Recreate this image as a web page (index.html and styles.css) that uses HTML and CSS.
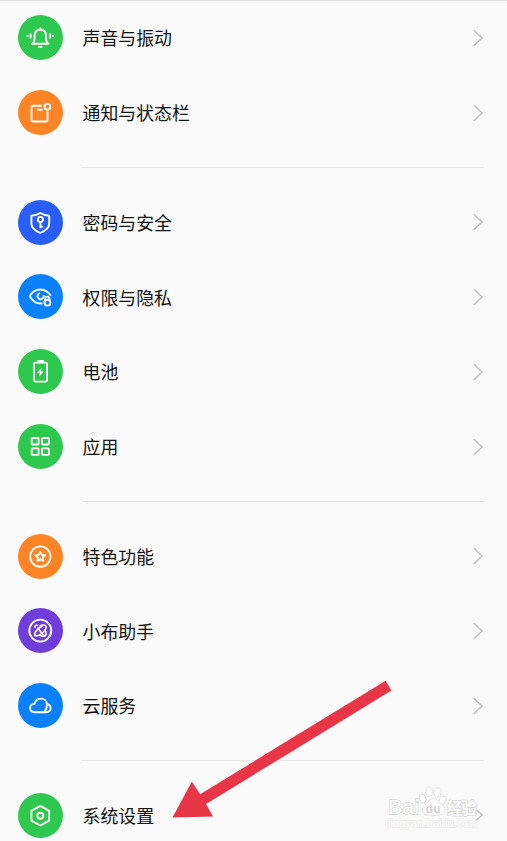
FILE: index.html
```html
<!DOCTYPE html>
<html lang="zh-CN">
<head>
    <meta charset="UTF-8">
    <meta name="viewport" content="width=device-width, initial-scale=1.0">
    <title>设置</title>
    <link rel="stylesheet" href="styles.css">
</head>
<body>

<!-- Chevron shared by all rows -->
<svg class="defs" width="0" height="0">
    <symbol id="chevron" viewBox="0 0 12 18">
        <path d="M1.7 1.2 L10 9 L1.7 16.8" fill="none" stroke="#c4c4c4" stroke-width="1.6"/>
    </symbol>
</svg>

<div class="settings">
    <!-- Sound and notifications -->
    <ul class="group">
        <li class="row">
            <span class="icon green">
                <svg viewBox="0 0 45 45">
                    <path d="M14 28.8 C16.8 27.2 16.6 25 16.6 21.2 C16.6 17 19 14.8 22.3 14.8 C25.6 14.8 28 17 28 21.2 C28 25 27.8 27.2 30.6 28.8 Z"/>
                    <path d="M22.3 12.5 V14.5 M20.3 32 H24.3 M12.6 18.5 V23.4 M32 18.5 V23.4 M9.6 20 V21.8 M35 20 V21.8"/>
                </svg>
            </span>
            <span class="label">声音与振动</span>
            <svg class="chevron"><use href="#chevron"/></svg>
        </li>
        <li class="row">
            <span class="icon orange">
                <svg viewBox="0 0 45 45">
                    <path d="M24 15.7 H15 Q13.5 15.7 13.5 17.2 V30 Q13.5 31.5 15 31.5 H28 Q29.5 31.5 29.5 30 V21.2 M19 19.7 H24.5"/>
                    <circle cx="29.4" cy="16.8" r="2.9"/>
                </svg>
            </span>
            <span class="label">通知与状态栏</span>
            <svg class="chevron"><use href="#chevron"/></svg>
        </li>
    </ul>

    <hr class="divider">

    <!-- Security, battery and apps -->
    <ul class="group">
        <li class="row">
            <span class="icon indigo">
                <svg viewBox="0 0 45 45">
                    <path d="M22.3 13 C25 14.7 28 15.5 31.2 15.8 V23.5 C31.2 28.5 27 31 22.3 33 C17.6 31 13.4 28.5 13.4 23.5 V15.8 C16.6 15.5 19.6 14.7 22.3 13 Z"/>
                    <circle cx="22.4" cy="19.4" r="2.5"/>
                    <path d="M22.4 22 V28.3 M22.4 26.6 H25.2"/>
                </svg>
            </span>
            <span class="label">密码与安全</span>
            <svg class="chevron"><use href="#chevron"/></svg>
        </li>
        <li class="row">
            <span class="icon blue">
                <svg viewBox="0 0 45 45">
                    <path d="M24.5 29.4 C18.5 30.3 14.5 26.8 12 22.8 Q11.6 22.2 12 21.6 C17 13.4 27.5 13.3 32.9 21.8"/>
                    <path d="M22 19.1 A3.1 3.1 0 1 0 25.6 21.2"/>
                    <circle cx="29.4" cy="28.7" r="2.9"/>
                    <path d="M27.3 26 V24.4 Q27.4 22.6 29.3 22.6 Q31.2 22.6 31.4 24.4 V26"/>
                </svg>
            </span>
            <span class="label">权限与隐私</span>
            <svg class="chevron"><use href="#chevron"/></svg>
        </li>
        <li class="row">
            <span class="icon green">
                <svg viewBox="0 0 45 45">
                    <rect x="16" y="13.6" width="13" height="19" rx="1.5"/>
                    <path d="M19.3 12.3 H25.7" stroke-width="2.6"/>
                    <path class="solid" d="M23.5 19.2 L19.2 24 H21.7 L21.1 27.4 L25.6 22.6 H23 Z"/>
                </svg>
            </span>
            <span class="label">电池</span>
            <svg class="chevron"><use href="#chevron"/></svg>
        </li>
        <li class="row">
            <span class="icon green">
                <svg viewBox="0 0 45 45">
                    <rect x="13.7" y="14" width="6.9" height="6.5" rx="1"/>
                    <rect x="24" y="14" width="6.9" height="6.5" rx="1"/>
                    <rect x="13.7" y="24.4" width="6.9" height="6.5" rx="1"/>
                    <rect x="24" y="24.4" width="6.9" height="6.5" rx="1"/>
                </svg>
            </span>
            <span class="label">应用</span>
            <svg class="chevron"><use href="#chevron"/></svg>
        </li>
    </ul>

    <hr class="divider">

    <!-- Features and services -->
    <ul class="group">
        <li class="row">
            <span class="icon orange">
                <svg viewBox="0 0 45 45">
                    <circle cx="22.3" cy="22.6" r="10.2"/>
                    <path d="M22.3 17.8 L23.8 20.8 L27.1 21.3 L24.7 23.6 L25.3 26.9 L22.3 25.3 L19.3 26.9 L19.9 23.6 L17.5 21.3 L20.8 20.8 Z"/>
                </svg>
            </span>
            <span class="label">特色功能</span>
            <svg class="chevron"><use href="#chevron"/></svg>
        </li>
        <li class="row">
            <span class="icon purple">
                <svg viewBox="0 0 45 45">
                    <circle cx="22.3" cy="22.6" r="11"/>
                    <g stroke-width="1.6">
                        <path d="M21.5 18.2 C24.5 16.3 28 16.6 28 19.2 C28 23 21 28.4 18 27.8 C15.8 27.2 16.6 24.4 19 22 C20.6 20.2 22.5 18.8 24.5 18.2"/>
                        <path d="M20.2 17.5 C17.8 16.6 16.2 18 17.2 20 M19.6 19.5 C22 23 25 27.8 27.3 27.7 C29 27 27.8 23.5 26.5 21.5 M21.5 27.3 C23.5 28.3 26 28.6 27.5 27.7"/>
                    </g>
                </svg>
            </span>
            <span class="label">小布助手</span>
            <svg class="chevron"><use href="#chevron"/></svg>
        </li>
        <li class="row">
            <span class="icon blue">
                <svg viewBox="0 0 45 45">
                    <path d="M16.7 29.2 H28.2 C31 29.2 32.6 27.3 32.6 25.2 C32.6 22.8 31 21.4 28.9 21.1 C28.6 17.8 26 15.6 22.8 15.6 C19.4 15.6 17.2 17.8 16.7 20.9 C14 20.9 12 22.8 12 25.1 C12 27.4 14 29.2 16.7 29.2 Z"/>
                    <path d="M28.9 21.1 C29.2 24.4 28.4 26.3 26.6 28.3"/>
                </svg>
            </span>
            <span class="label">云服务</span>
            <svg class="chevron"><use href="#chevron"/></svg>
        </li>
    </ul>

    <hr class="divider">

    <!-- System -->
    <ul class="group">
        <li class="row">
            <span class="icon green">
                <svg viewBox="0 0 45 45">
                    <path d="M22.3 12.9 L31.2 17.8 V27.6 L22.3 32.5 L13.4 27.6 V17.8 Z"/>
                    <circle cx="22.3" cy="22.7" r="3"/>
                </svg>
            </span>
            <span class="label">系统设置</span>
            <svg class="chevron"><use href="#chevron"/></svg>
        </li>
    </ul>
</div>

<!-- Arrow pointing at the system settings row -->
<svg class="pointer" viewBox="0 0 220 140">
    <path d="M0.5 137.5 L19.8 101.8 L28.2 114.3 L213.6 0.8 L219.4 10.5 L34 124 L41 136.5 Z" fill="#e93646"/>
</svg>

<!-- Watermark -->
<svg class="watermark" viewBox="0 0 104 50">
    <g class="mark">
        <text class="brand" x="2" y="32.3" textLength="31" lengthAdjust="spacingAndGlyphs">Bai</text>
        <path d="M47.5 16.5 C51 16.5 52.3 19.5 54.5 21.5 C57 23.8 59.5 25.5 58.5 29 C57.5 33.5 53 33.5 47.5 33.5 C42 33.5 37.5 33.5 36.5 29 C35.6 25.5 38 23.8 40.5 21.5 C42.7 19.5 44 16.5 47.5 16.5 Z"/>
        <ellipse cx="36.6" cy="16.8" rx="3.2" ry="4.4" transform="rotate(-12 36.6 16.8)"/>
        <ellipse cx="43.2" cy="9.8" rx="3.5" ry="4.9"/>
        <ellipse cx="51.6" cy="10.4" rx="3.5" ry="4.9" transform="rotate(10 51.6 10.4)"/>
        <ellipse cx="56.6" cy="18.3" rx="3.2" ry="4.4" transform="rotate(20 56.6 18.3)"/>
        <text class="du" x="39.5" y="31.3" textLength="15">du</text>
        <text class="jingyan" x="61" y="31.5" textLength="30">经验</text>
        <text class="site" x="2" y="44.5" textLength="90" lengthAdjust="spacingAndGlyphs">jingyan.baidu.com</text>
    </g>
</svg>

</body>
</html>
```
FILE: styles.css
```css
* {
    box-sizing: border-box;
}

body {
    position: relative;
    height: 841px;
    margin: 0;
    overflow: hidden;
    background-color: #fafafa;
    color: #111;
    font-family: "Noto Sans CJK SC", "Noto Sans", sans-serif;
}

.defs {
    position: absolute;
}

.settings {
    height: 841px;
    padding: 0.3px 23px 0 18px;
    overflow: hidden;
    box-shadow: inset 0 1px 0 #dedede;
}

.group {
    margin: 0;
    padding: 0;
    list-style: none;
}

.row {
    display: flex;
    align-items: center;
    height: 74.9px;
}

.icon {
    flex: none;
    width: 45px;
    height: 45px;
    border-radius: 50%;
}

.icon svg {
    display: block;
    width: 45px;
    height: 45px;
    fill: none;
    stroke: #fff;
    stroke-width: 1.9;
    stroke-linejoin: round;
}

.icon .solid {
    fill: #fff;
    stroke: none;
}

.green {
    background-color: #2dc84d;
}

.orange {
    background-color: #ff8426;
}

.indigo {
    background-color: #285ef4;
}

.blue {
    background-color: #0a80fc;
}

.purple {
    background-color: #703cdc;
}

.label {
    flex: 1;
    margin-left: 19.5px;
    padding-bottom: 0.8px;
    font-size: 17.9px;
    line-height: 26px;
}

.chevron {
    flex: none;
    width: 12px;
    height: 18px;
}

.divider {
    height: 1px;
    margin: 16.9px 0 16.6px 64px;
    border: none;
    background-color: #e8e8e8;
}

.pointer {
    position: absolute;
    left: 172px;
    top: 680px;
    width: 220px;
    height: 140px;
}

.watermark {
    position: absolute;
    left: 386px;
    top: 782px;
    width: 104px;
    height: 50px;
}

.mark {
    fill: #fdfdfd;
    stroke: #dadada;
    stroke-width: 0.8;
}

.mark text {
    font-family: "Liberation Sans", "Noto Sans CJK SC", sans-serif;
    font-weight: bold;
    paint-order: stroke;
    stroke-width: 1.5;
}

.mark .brand {
    font-size: 20px;
    font-weight: normal;
}

.mark .du {
    font-size: 12px;
    fill: #d4d4d4;
    stroke: none;
}

.mark .jingyan {
    font-size: 15.5px;
}

.mark .site {
    font-size: 10.5px;
    font-weight: normal;
    stroke: #ececec;
    stroke-width: 1.3;
}
```
